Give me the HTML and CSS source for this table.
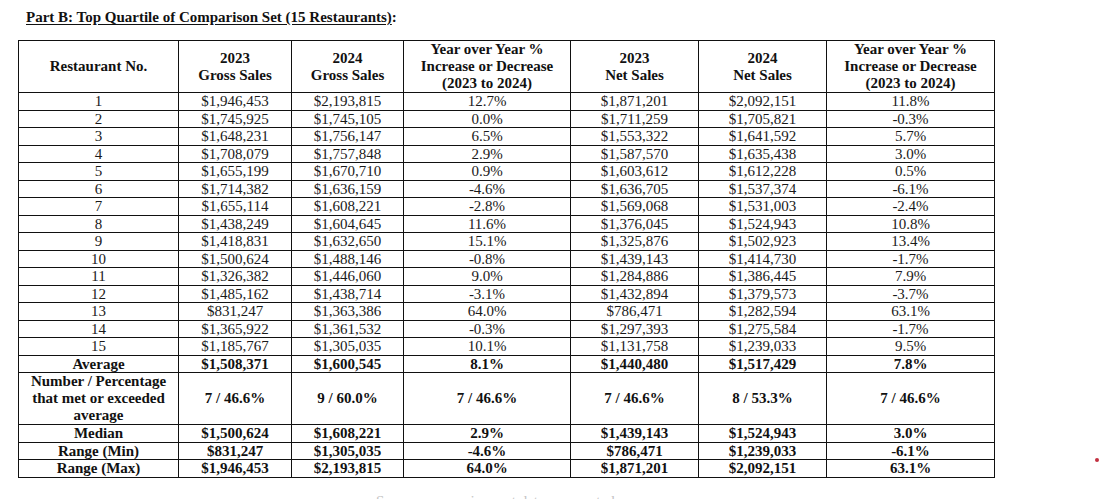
FILE: index.html
```html
<!DOCTYPE html>
<html>
<head>
<meta charset="utf-8">
<link rel="stylesheet" href="styles.css">
</head>
<body>
<div class="page">
  <h2 class="title"><span class="ul">Part B: Top Quartile of Comparison Set (15 Restaurants)</span>:</h2>
  <table class="data">
    <colgroup>
      <col class="c1"><col class="c2"><col class="c3"><col class="c4"><col class="c5"><col class="c6"><col class="c7">
    </colgroup>
    <thead>
      <tr>
        <th>Restaurant No.</th>
        <th>2023<br>Gross Sales</th>
        <th>2024<br>Gross Sales</th>
        <th>Year over Year %<br>Increase or Decrease<br>(2023 to 2024)</th>
        <th>2023<br>Net Sales</th>
        <th>2024<br>Net Sales</th>
        <th>Year over Year %<br>Increase or Decrease<br>(2023 to 2024)</th>
      </tr>
    </thead>
    <tbody>
      <tr><td>1</td><td>$1,946,453</td><td>$2,193,815</td><td>12.7%</td><td>$1,871,201</td><td>$2,092,151</td><td>11.8%</td></tr>
      <tr><td>2</td><td>$1,745,925</td><td>$1,745,105</td><td>0.0%</td><td>$1,711,259</td><td>$1,705,821</td><td>-0.3%</td></tr>
      <tr><td>3</td><td>$1,648,231</td><td>$1,756,147</td><td>6.5%</td><td>$1,553,322</td><td>$1,641,592</td><td>5.7%</td></tr>
      <tr><td>4</td><td>$1,708,079</td><td>$1,757,848</td><td>2.9%</td><td>$1,587,570</td><td>$1,635,438</td><td>3.0%</td></tr>
      <tr><td>5</td><td>$1,655,199</td><td>$1,670,710</td><td>0.9%</td><td>$1,603,612</td><td>$1,612,228</td><td>0.5%</td></tr>
      <tr><td>6</td><td>$1,714,382</td><td>$1,636,159</td><td>-4.6%</td><td>$1,636,705</td><td>$1,537,374</td><td>-6.1%</td></tr>
      <tr><td>7</td><td>$1,655,114</td><td>$1,608,221</td><td>-2.8%</td><td>$1,569,068</td><td>$1,531,003</td><td>-2.4%</td></tr>
      <tr><td>8</td><td>$1,438,249</td><td>$1,604,645</td><td>11.6%</td><td>$1,376,045</td><td>$1,524,943</td><td>10.8%</td></tr>
      <tr><td>9</td><td>$1,418,831</td><td>$1,632,650</td><td>15.1%</td><td>$1,325,876</td><td>$1,502,923</td><td>13.4%</td></tr>
      <tr><td>10</td><td>$1,500,624</td><td>$1,488,146</td><td>-0.8%</td><td>$1,439,143</td><td>$1,414,730</td><td>-1.7%</td></tr>
      <tr><td>11</td><td>$1,326,382</td><td>$1,446,060</td><td>9.0%</td><td>$1,284,886</td><td>$1,386,445</td><td>7.9%</td></tr>
      <tr><td>12</td><td>$1,485,162</td><td>$1,438,714</td><td>-3.1%</td><td>$1,432,894</td><td>$1,379,573</td><td>-3.7%</td></tr>
      <tr><td>13</td><td>$831,247</td><td>$1,363,386</td><td>64.0%</td><td>$786,471</td><td>$1,282,594</td><td>63.1%</td></tr>
      <tr><td>14</td><td>$1,365,922</td><td>$1,361,532</td><td>-0.3%</td><td>$1,297,393</td><td>$1,275,584</td><td>-1.7%</td></tr>
      <tr><td>15</td><td>$1,185,767</td><td>$1,305,035</td><td>10.1%</td><td>$1,131,758</td><td>$1,239,033</td><td>9.5%</td></tr>
      <tr class="sum"><td>Average</td><td>$1,508,371</td><td>$1,600,545</td><td>8.1%</td><td>$1,440,480</td><td>$1,517,429</td><td>7.8%</td></tr>
      <tr class="sum tall"><td>Number / Percentage<br>that met or exceeded<br>average</td><td>7 / 46.6%</td><td>9 / 60.0%</td><td>7 / 46.6%</td><td>7 / 46.6%</td><td>8 / 53.3%</td><td>7 / 46.6%</td></tr>
      <tr class="sum"><td>Median</td><td>$1,500,624</td><td>$1,608,221</td><td>2.9%</td><td>$1,439,143</td><td>$1,524,943</td><td>3.0%</td></tr>
      <tr class="sum"><td>Range (Min)</td><td>$831,247</td><td>$1,305,035</td><td>-4.6%</td><td>$786,471</td><td>$1,239,033</td><td>-6.1%</td></tr>
      <tr class="sum"><td>Range (Max)</td><td>$1,946,453</td><td>$2,193,815</td><td>64.0%</td><td>$1,871,201</td><td>$2,092,151</td><td>63.1%</td></tr>
    </tbody>
  </table>
  <p class="note">Source: comparison set data as reported</p>
</div>
<span class="mark"></span>
</body>
</html>
```

FILE: styles.css
```css
html, body {
  margin: 0;
  padding: 0;
  background: #ffffff;
  overflow: hidden;
}

.page {
  padding: 9px 0 0 18px;
  font-family: "Liberation Serif", "Times New Roman", serif;
  color: #1a1a1a;
}

.title {
  margin: 0 0 14px 8px;
  font-size: 15px;
  line-height: 17px;
  font-weight: bold;
  color: #111;
}

.title .ul {
  text-decoration: underline;
  text-underline-offset: 2px;
}

.data {
  border-collapse: collapse;
  table-layout: fixed;
  width: 977px;
  font-size: 15px;
}

.c1 { width: 160px; }
.c2 { width: 113px; }
.c3 { width: 112px; }
.c4 { width: 167px; }
.c5 { width: 128px; }
.c6 { width: 128px; }
.c7 { width: 168px; }

.data th,
.data td {
  border: 1px solid #111;
  padding: 0;
  text-align: center;
  vertical-align: middle;
}

.data th {
  height: 51px;
  line-height: 17px;
  font-weight: bold;
  color: #111;
}

.data td {
  height: 16.5px;
  line-height: 16.5px;
}

.data tr.sum td {
  font-weight: bold;
  color: #111;
}

.data tr.tall td {
  height: 51px;
  line-height: 17px;
}

.note {
  margin: 15px 0 0 358px;
  font-size: 15px;
  line-height: 17px;
  color: #c4c4c4;
}

.mark {
  position: absolute;
  left: 1095px;
  top: 458px;
  width: 4px;
  height: 4px;
  border-radius: 50%;
  background: #c23040;
}
```
